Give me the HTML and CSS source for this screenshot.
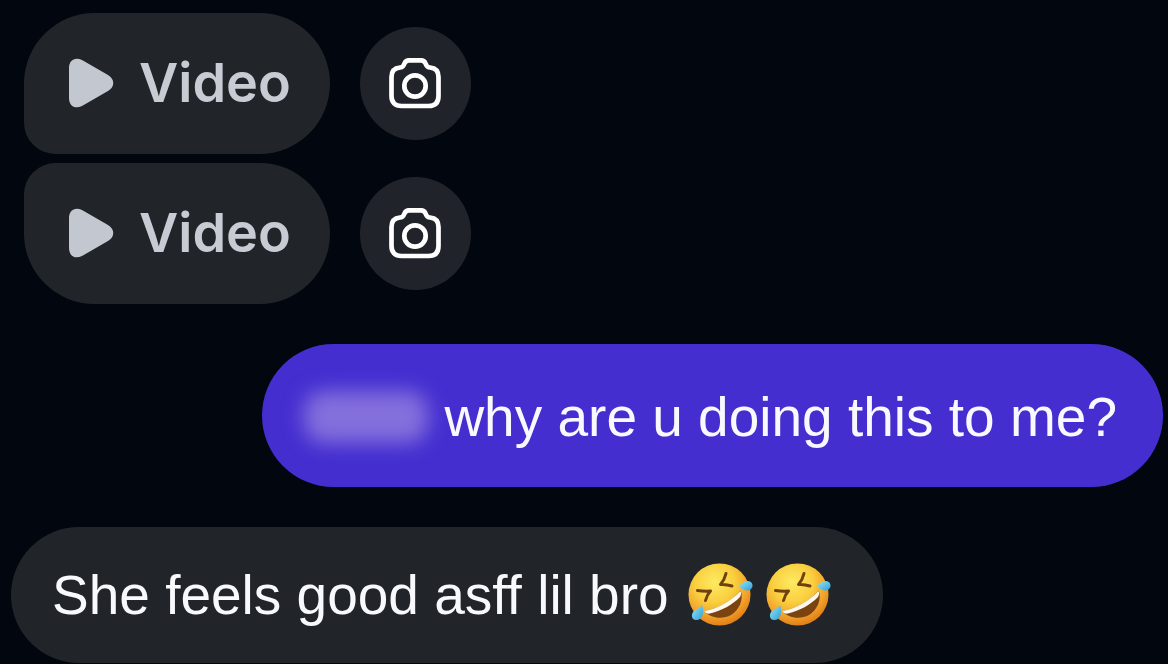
FILE: index.html
```html
<!DOCTYPE html>
<html lang="en">
<head>
<meta charset="utf-8">
<meta name="viewport" content="width=device-width, initial-scale=1">
<title>Chat</title>
<link rel="stylesheet" href="styles.css">
</head>
<body>
<svg class="defs" aria-hidden="true">
  <defs>
    <radialGradient id="face" cx="0.42" cy="0.3" r="0.72">
      <stop offset="0" stop-color="#fdea62"/>
      <stop offset="0.45" stop-color="#f9cf3f"/>
      <stop offset="0.75" stop-color="#f2a42c"/>
      <stop offset="1" stop-color="#e07c17"/>
    </radialGradient>
    <linearGradient id="tear" x1="0" y1="0" x2="1" y2="1">
      <stop offset="0" stop-color="#9ae6f8"/>
      <stop offset="1" stop-color="#2c9fd8"/>
    </linearGradient>
    <symbol id="play" viewBox="0 0 46 50">
      <path d="M1 10C1 2 7-1.500 14 2L40 17C47 21 47 29 40 33L14 48C7 51.500 1 48 1 40Z"/>
    </symbol>
    <symbol id="camera" viewBox="0 0 54 52">
      <g fill="none" stroke="currentColor" stroke-width="4.700" stroke-linejoin="round">
        <path d="M12 9.500C15 9.500 15.500 8 16.500 5.500C17.500 2.700 19 2.300 21 2.300H33C35 2.300 36.500 2.700 37.500 5.500C38.500 8 39 9.500 42 9.500C47.500 10 50.500 13.500 50.500 19V38C50.500 44.500 47 48 40.500 48H13.500C7 48 3.500 44.500 3.500 38V19C3.500 13.500 6.500 10 12 9.500Z"/>
        <circle cx="27" cy="28" r="10.700"/>
      </g>
    </symbol>
    <symbol id="rofl" viewBox="0 0 66 64">
      <circle cx="32.500" cy="31.500" r="31" fill="url(#face)"/>
      <path d="M17 48C30 46 45 38 53.700 27.500C57 37 52 47 44 52C35 57 23 55 17 48Z" fill="#7a430f"/>
      <path d="M17 48C30 46 44 38 53.500 28C54.500 30 54 32 53 34C45 42 35 47.500 23 50.500C20 51 18.500 50 17 48Z" fill="#fff8ee"/>
      <g fill="none" stroke="#71400f" stroke-width="3" stroke-linecap="round" stroke-linejoin="round">
        <path d="M10.500 27.500Q17 28.500 23.500 28Q20 31.500 18.500 37.500"/>
        <path d="M39 10.500Q37.500 17 33.500 21.500Q39 21 45 23"/>
      </g>
      <path d="M15 42C18 49 15.500 57 9.500 57C4.500 57.500 3.500 51 7 48C10 45.500 12.500 45.500 15 42Z" fill="url(#tear)"/>
      <path d="M52 22C56 21 57 18 61 18C66 18.500 67 24 63.500 26.500C60 29 54 26.500 52 22Z" fill="url(#tear)"/>
    </symbol>
  </defs>
</svg>
<main class="chat">
  <div class="videos">
    <div class="row">
      <button class="bubble video video-first" type="button"><svg class="play" aria-hidden="true"><use href="#play"/></svg>Video</button>
      <button class="camera-button" type="button" aria-label="Reply with camera"><svg class="camera" aria-hidden="true"><use href="#camera"/></svg></button>
    </div>
    <div class="row">
      <button class="bubble video video-last" type="button"><svg class="play" aria-hidden="true"><use href="#play"/></svg>Video</button>
      <button class="camera-button" type="button" aria-label="Reply with camera"><svg class="camera" aria-hidden="true"><use href="#camera"/></svg></button>
    </div>
  </div>
  <p class="bubble sent"><span class="hidden-name" role="img" aria-label="Hidden name"></span>why are u doing this to me?</p>
  <p class="bubble received">She feels good asff lil bro <span class="emojis"><svg class="emoji" role="img" aria-label="🤣"><use href="#rofl"/></svg><svg class="emoji" role="img" aria-label="🤣"><use href="#rofl"/></svg></span></p>
</main>
</body>
</html>
```

FILE: styles.css
```css
* {
  box-sizing: border-box;
}

body {
  margin: 0;
  background: #01060f;
  color: #f8f9fc;
  font-family: "Liberation Sans", Arial, sans-serif;
  font-size: 55px;
  line-height: 64px;
}

.defs {
  position: absolute;
  width: 0;
  height: 0;
}

.chat {
  display: flex;
  flex-direction: column;
  gap: 40px;
  padding: 13px 5px 0 11px;
}

.videos {
  display: flex;
  flex-direction: column;
  gap: 9px;
  padding-left: 13px;
}

.row {
  display: flex;
  align-items: center;
  gap: 30px;
}

.bubble {
  display: flex;
  align-items: center;
  margin: 0;
  border: 0;
  border-radius: 72px;
  background: #212529;
}

.video {
  gap: 25px;
  padding: 38px 39px 39px 44px;
  color: #c8cbd3;
  font-family: Inter, "Liberation Sans", sans-serif;
  font-size: 54px;
  font-weight: 600;
  line-height: 64px;
}

.video-first {
  border-bottom-left-radius: 32px;
}

.video-last {
  border-top-left-radius: 32px;
}

.play {
  width: 46px;
  height: 50px;
  fill: #c3c7d0;
}

.camera-button {
  display: grid;
  place-items: center;
  width: 111px;
  height: 113px;
  padding: 0;
  border: 0;
  border-radius: 50%;
  background: #20242a;
  color: #ffffff;
}

.camera {
  width: 54px;
  height: 52px;
}

.sent {
  align-self: flex-end;
  gap: 16px;
  padding: 41px 46px 38px 42px;
  background: #442ed0;
}

.hidden-name {
  width: 124px;
  height: 52px;
  border-radius: 20px;
  background: #8470dc;
  filter: blur(10px);
}

.received {
  align-self: flex-start;
  gap: 18px;
  padding: 36px 52px 36px 41px;
}

.emojis {
  display: flex;
  gap: 12px;
}

.emoji {
  width: 66px;
  height: 64px;
}
```
